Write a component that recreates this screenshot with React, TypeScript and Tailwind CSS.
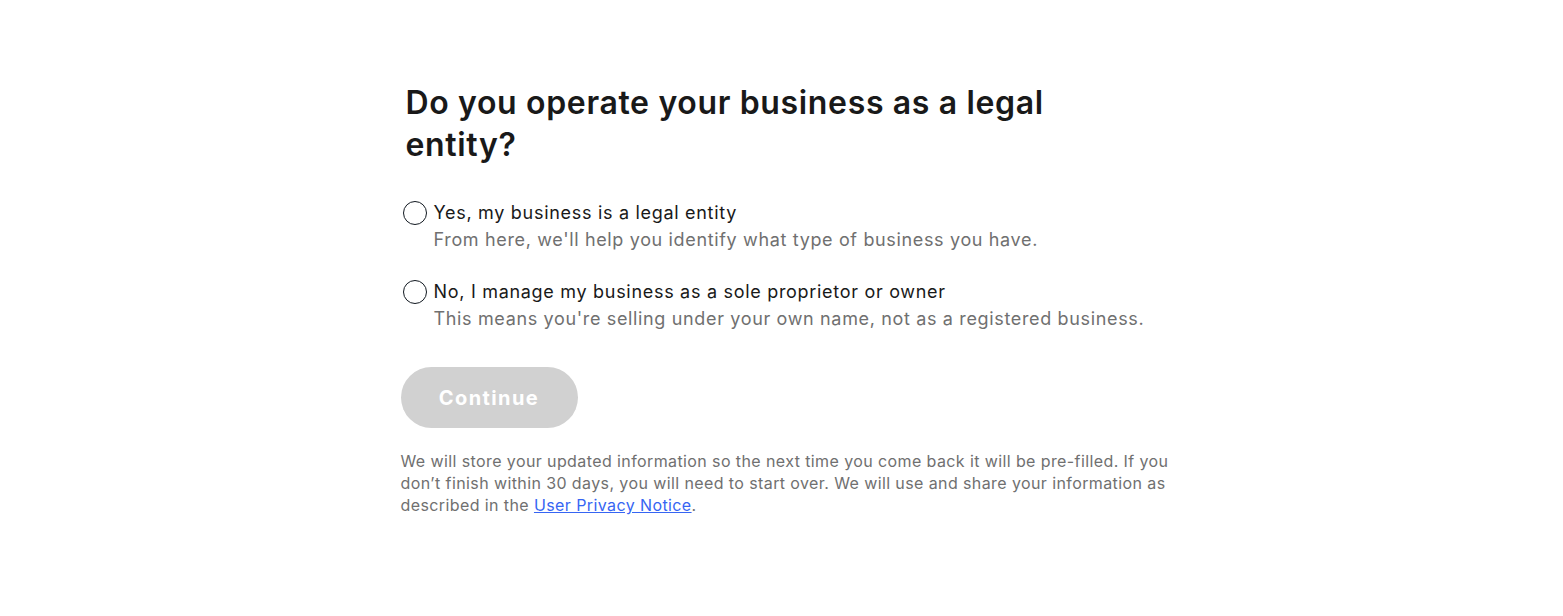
import React from "react";

function Radio({ label, desc }: { label: string; desc: string }) {
  return (
    <label className="flex items-start gap-[7px]">
      <span className="mt-[1px] h-[24px] w-[24px] shrink-0 rounded-full border-[1.5px] border-[#111820] bg-white" />
      <span className="flex flex-col">
        <span className="text-[18px] leading-[26px] tracking-[0.7px] text-[#191919]">{label}</span>
        <span className="text-[18px] leading-[28px] tracking-[0.65px] text-[#707070]">{desc}</span>
      </span>
    </label>
  );
}

export default function App() {
  return (
    <div className="min-h-[616px] w-full bg-white" style={{ fontFamily: "Inter, 'Noto Sans', sans-serif" }}>
      <div className="mx-auto w-[770px] pt-[82px] translate-x-[4px]">
        <h1 className="ml-[5px] max-w-[660px] text-[32px] font-semibold leading-[42px] tracking-[0.65px] text-[#191919]">
          Do you operate your business as a legal entity?
        </h1>
        <div className="mt-[34px] flex flex-col gap-[25px] pl-[2px]">
          <Radio label="Yes, my business is a legal entity" desc="From here, we'll help you identify what type of business you have." />
          <Radio label="No, I manage my business as a sole proprietor or owner" desc="This means you're selling under your own name, not as a registered business." />
        </div>
        <button className="mt-[34px] h-[61px] w-[177px] rounded-full bg-[#d1d1d1] text-[20px] font-bold tracking-[1.4px] text-white">
          Continue
        </button>
        <p className="mt-[22px] text-[16px] leading-[22px] tracking-[0.4px] text-[#707070]">
          We will store your updated information so the next time you come back it will be pre-filled. If you don’t finish within 30 days, you will need to start over. We will use and share your information as described in the{" "}
          <a className="text-[#3665f3] underline">User Privacy Notice</a>.
        </p>
      </div>
    </div>
  );
}
